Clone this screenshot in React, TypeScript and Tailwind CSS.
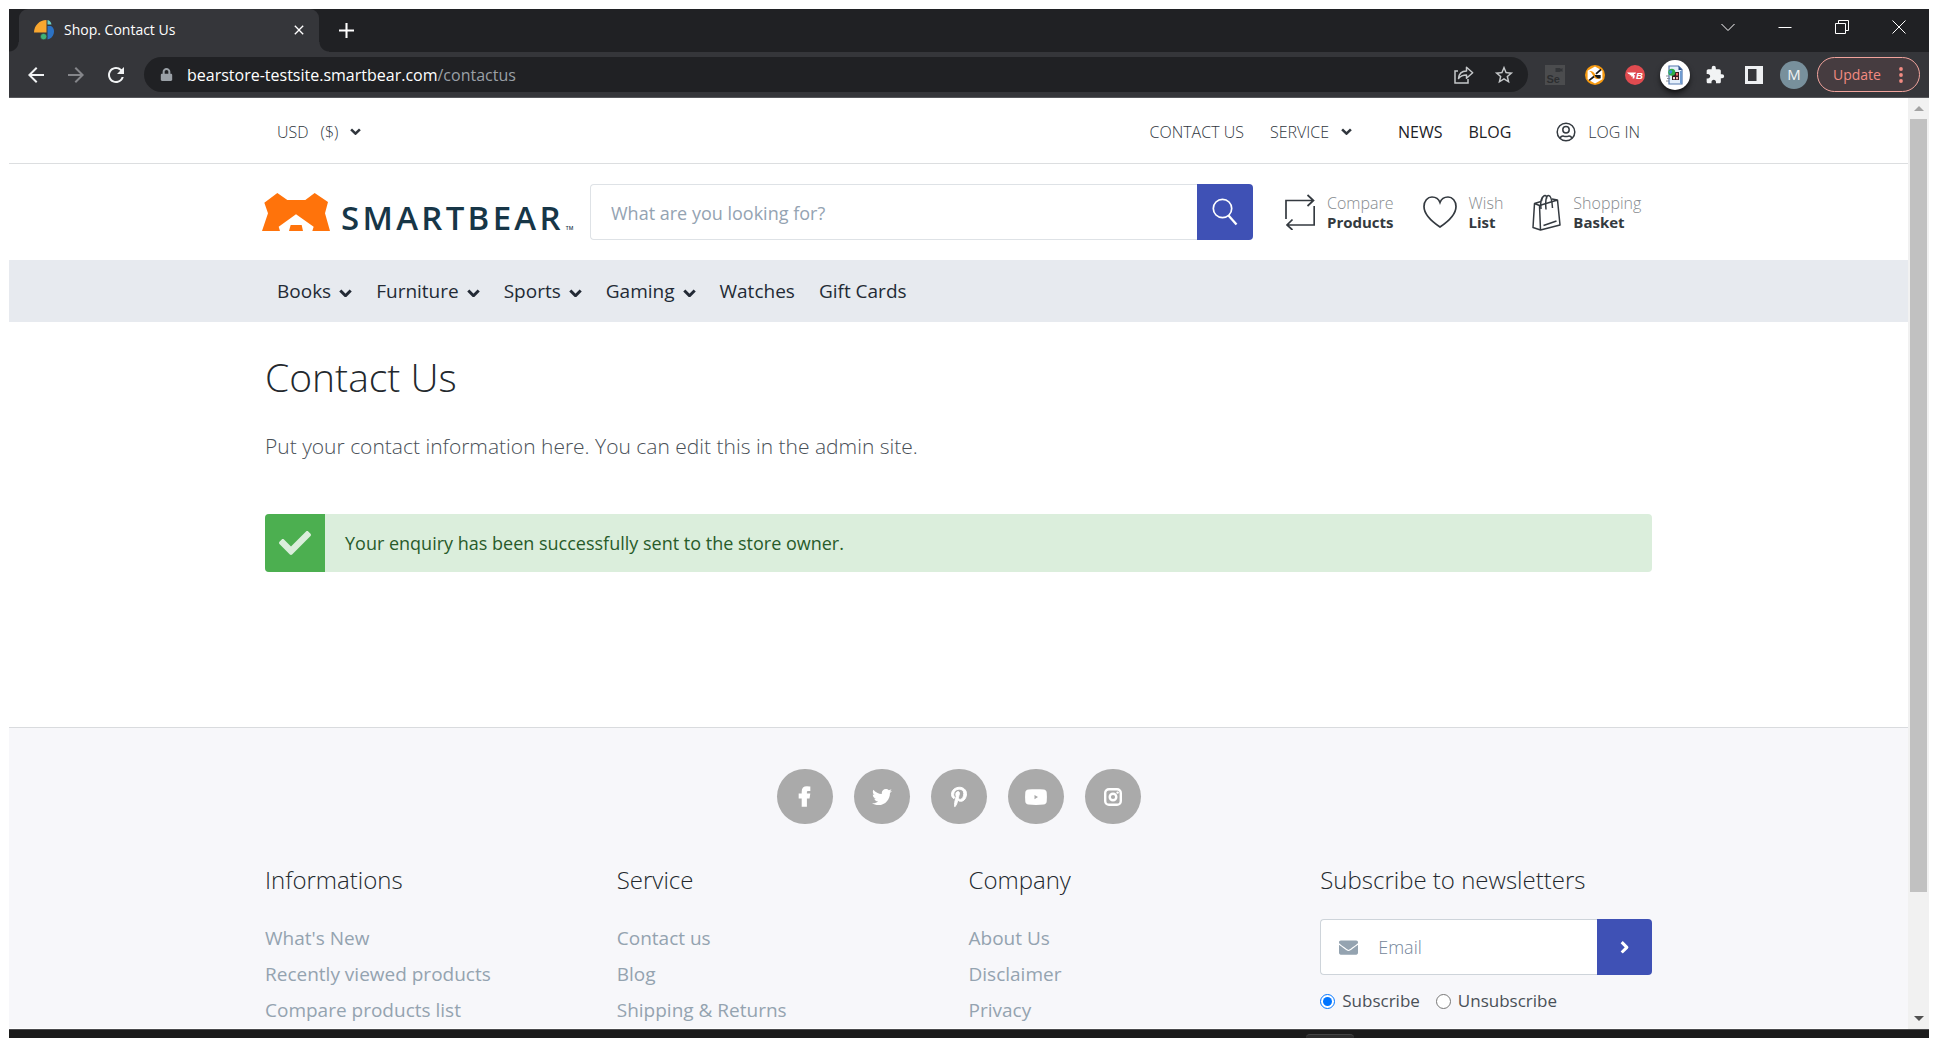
import React from "react";
import { FaCheck, FaEnvelope, FaFacebookF, FaLock, FaPinterestP, FaTwitter } from "react-icons/fa";
import { MdArrowBack, MdArrowForward, MdClose, MdExtension, MdRefresh, MdStarOutline } from "react-icons/md";

function Chevron({ className = "w-3" }: { className?: string }) {
  return (
    <svg viewBox="0 0 12 8" className={className} fill="none" stroke="currentColor" strokeWidth="2.8" strokeLinejoin="round" aria-hidden="true">
      <path d="M1.2 1.4 6 6.2l4.8-4.8" />
    </svg>
  );
}

function Favicon() {
  return (
    <svg viewBox="0 0 20 20" className="size-5 shrink-0" aria-hidden="true">
      <path d="M12.500 0v12.500H0C0 5.500 5.500 0 12.500 0Z" fill="#f9a72f" />
      <path d="M13.500 0c2 .6 3.600 2 4 4.500h-4Z" fill="#6fd0c4" />
      <path d="M13.500 6h3.500c3 1.500 3.500 5 2.600 8-.9 3-3.200 5-6.100 5.500Z" fill="#2c72c4" />
      <circle cx="9.600" cy="16.600" r="3.200" fill="#3fb277" stroke="#35363a" strokeWidth=".6" />
    </svg>
  );
}

function ShareIcon() {
  return (
    <svg viewBox="0 0 20 18" className="h-[18px] w-5" fill="none" stroke="#c4c7c9" strokeWidth="1.500" aria-hidden="true">
      <path d="M4 5H1v12h13v-4" />
      <path d="M4.500 12.500c.5-5 3.500-7.500 8-7.500V1.200l6.200 5.600-6.200 5.400V9c-3.500 0-6 1-8 3.500Z" strokeLinejoin="round" />
    </svg>
  );
}

function SeleniumIcon() {
  return (
    <svg viewBox="0 0 20 20" className="size-5" aria-hidden="true">
      <path d="M0 0h20v20H0Z" fill="#4b4c4e" />
      <path d="M10.500 3h5v1.200L17.500 3v4l-2-1.200V7h-5Z" fill="#333538" />
      <text x="1.500" y="17.500" fontSize="11" fontWeight="700" fontFamily="Liberation Sans, sans-serif" fill="#2c2e30">Se</text>
    </svg>
  );
}

function HexIcon() {
  return (
    <svg viewBox="0 0 20 20" className="size-5" aria-hidden="true">
      <circle cx="10" cy="10" r="10" fill="#f79a10" />
      <path d="m10 1.500 7.400 4.200v8.600L10 18.500l-7.400-4.200V5.700Z" fill="#fff" />
      <path d="M4 6c2.800 0 4.200.6 5.500 2.500l2 3c1 1.400 2 2 3.700 2.200-2.700.9-5 .2-6.200-1.700L7.300 9.200C6.500 7.700 5.700 6.700 4 6Z" fill="#f79a10" />
      <path d="m16 4.500-5 4.300M9 11.500l-4.800 3.800" stroke="#17191b" strokeWidth="1.700" />
      <path d="M9.500 10h6.200v3.200C13 14 11 13 9.500 10Z" fill="#17191b" />
    </svg>
  );
}

function BlazeIcon() {
  return (
    <svg viewBox="0 0 20 20" className="size-5" aria-hidden="true">
      <circle cx="10" cy="10" r="10" fill="#e04b50" />
      <path d="M2 7.500h9l-.8 1.500h-1l-.4 1.200H10l-.8 3.300H7.500l.4-2H6l.3-1.300H4.500L4.700 9H3.500Z" fill="#fff" />
      <text x="11" y="13.500" fontSize="9.500" fontWeight="700" fontStyle="italic" fontFamily="Liberation Sans, sans-serif" fill="#fff">B</text>
    </svg>
  );
}

function DocumentIcon() {
  return (
    <span className="flex size-[30px] items-center justify-center rounded-full bg-white shadow-md shadow-black/60">
      <svg viewBox="0 0 18 20" className="h-5 w-[18px]" aria-hidden="true">
        <path d="M3 1h9.500L16 4.500V19H3Z" fill="#e4effb" stroke="#5478ad" strokeWidth="1.200" />
        <path d="M12.500 1v4H16Z" fill="#2d4f86" />
        <path d="M14 6h2v12.500h-2Z" fill="#6f9bd0" />
        <path d="M6 7h7v8H6Z" fill="#3c1c24" />
        <path d="M10 8h2v2.500h-2Z" fill="#f06a6a" />
        <path d="M7 12h2v2.300H7Z" fill="#f4e0e1" />
        <path d="M10 12h2v2.300h-2Z" fill="#f4b0a6" />
        <circle cx="5.800" cy="7.200" r="3.500" fill="#2fae4a" />
        <path d="M3 6.500c1.200-1.500 2.500-1.500 3.500-.5L5 9c-1 0-1.800-.8-2-2.500Z" fill="#3f8fe0" />
        <path d="M0 11h3M1 13.500h3M0 16h3" stroke="#7f8790" strokeWidth=".9" />
      </svg>
    </span>
  );
}

function PanelIcon() {
  return (
    <svg viewBox="0 0 18 18" className="size-[18px]" aria-hidden="true">
      <path d="M0 0h18v18H0Zm3 3v12h8.500V3Z" fill="#eef0f2" fillRule="evenodd" />
    </svg>
  );
}

function WindowIcon({ d, label }: { d: string; label: string }) {
  return (
    <button aria-label={label} className="flex h-9 w-[57px] items-center justify-center">
      <svg viewBox="0 0 14 14" className="size-[14px]" fill="none" stroke="#fff" strokeWidth="1" aria-hidden="true">
        <path d={d} />
      </svg>
    </button>
  );
}

function TabStrip() {
  return (
    <div className="flex h-[43px] items-end bg-[#202124] pl-[10px]">
      <div className="relative flex h-[43px] w-[300px] items-center rounded-t-[9px] bg-[#35363a] pr-3 pb-0.5 pl-[15px] text-white">
        <span className="absolute bottom-0 -left-[10px] size-[10px] bg-[radial-gradient(circle_at_0_0,#202124_9px,#35363a_10px)]" />
        <span className="absolute -right-[10px] bottom-0 size-[10px] bg-[radial-gradient(circle_at_100%_0,#202124_9px,#35363a_10px)]" />
        <Favicon />
        <span className="ml-[10px] flex-1 text-sm">Shop. Contact Us</span>
        <button aria-label="Close tab"><MdClose size={16} /></button>
      </div>
      <button aria-label="New tab" className="flex h-[43px] w-[55px] items-center justify-center">
        <svg viewBox="0 0 16 16" className="size-[15px]" stroke="#fff" strokeWidth="2.200" aria-hidden="true">
          <path d="M8 0v16M0 8h16" />
        </svg>
      </button>
      <div className="ml-auto flex self-start pr-0.5">
        <WindowIcon label="Search tabs" d="m.5 4 6.500 6.500L13.500 4" />
        <WindowIcon label="Minimize" d="M.5 7.500h13" />
        <WindowIcon label="Restore" d="M.5 3.500h10v10h-10ZM3.500 3V.5h10v10H11" />
        <WindowIcon label="Close" d="m.5.5 13 13M13.500.5l-13 13" />
      </div>
    </div>
  );
}

function Toolbar() {
  return (
    <div className="flex h-[46px] items-center border-b border-[#56575b] bg-[#35363a] pr-[9px] pl-[15px] text-[#f1f3f4]">
      <div className="flex items-center gap-4">
        <button aria-label="Back"><MdArrowBack size={24} /></button>
        <button aria-label="Forward" className="text-[#85868a]"><MdArrowForward size={24} /></button>
        <button aria-label="Reload"><MdRefresh size={24} /></button>
      </div>
      <div className="ml-4 flex h-[35px] flex-1 items-center rounded-full bg-[#202124] pr-[13px] pl-4">
        <FaLock size={13} className="text-[#9aa0a6]" />
        <p className="ml-[14px] flex-1 text-base text-white">
          bearstore-testsite.smartbear.com<span className="text-[#9aa0a6]">/contactus</span>
        </p>
        <button aria-label="Share"><ShareIcon /></button>
        <button aria-label="Bookmark" className="ml-[19px] text-[#c4c7c9]"><MdStarOutline size={22} /></button>
      </div>
      <div className="ml-[17px] flex items-center gap-5">
        <SeleniumIcon />
        <HexIcon />
        <BlazeIcon />
        <div className="-mx-[5px]"><DocumentIcon /></div>
        <MdExtension size={20} />
        <PanelIcon />
        <span className="-ml-[3px] flex size-7 items-center justify-center rounded-full bg-[#78909c] text-[15px]">M</span>
      </div>
      <button className="ml-[9px] flex h-[35px] w-[103px] items-center justify-between rounded-full border border-[#f2a49d] bg-[#463c40] pr-4 pl-[15px] text-sm text-[#f28b82]">
        Update
        <svg viewBox="0 0 4 16" className="h-4 w-1" fill="currentColor" aria-hidden="true">
          <circle cx="2" cy="2" r="1.900" /><circle cx="2" cy="8" r="1.900" /><circle cx="2" cy="14" r="1.900" />
        </svg>
      </button>
    </div>
  );
}

const container = "mx-auto w-full max-w-[1387px]";

function TopBar() {
  return (
    <div className="border-b border-[#dcdee0]">
      <div className={`${container} flex h-[65px] items-center pt-0.5 pr-3 pl-3 text-base font-light text-[#30363d]`}>
        <button className="flex items-center gap-3">
          <span>USD</span><span>($)</span><Chevron className="w-[11px]" />
        </button>
        <nav className="ml-auto flex items-center">
          <a href="#contact">CONTACT US</a>
          <a href="#service" className="ml-[26px] flex items-center gap-3">SERVICE <Chevron className="w-[11px]" /></a>
          <a href="#news" className="ml-[46px] font-medium text-[#1c2126]">NEWS</a>
          <a href="#blog" className="ml-[26px] font-medium text-[#1c2126]">BLOG</a>
          <a href="#login" className="ml-[45px] flex items-center gap-3">
            <svg viewBox="0 0 20 20" className="size-5" fill="none" stroke="#343a40" strokeWidth="1.500" aria-hidden="true">
              <circle cx="10" cy="10" r="8.800" />
              <circle cx="10" cy="7.800" r="3.200" />
              <path d="M4 16c1.200-2 3-2.200 4-1.800 1.300.4 2.700.4 4 0 1-.4 2.800-.2 4 1.800" />
            </svg>
            LOG IN
          </a>
        </nav>
      </div>
    </div>
  );
}

function Logo() {
  return (
    <a href="#home" className="-ml-[3px] flex w-[328px] items-center">
      <svg viewBox="66 99 204 114" className="h-[38px] w-[68px]" fill="#ff730b" aria-hidden="true">
        <path d="m66 213 18-53-11-32 39-29 30 21h54l28-21 40 27-9 34 15 53h-53l4-13-53-37-52 37 4 13Z" />
        <path d="m147 213 5-18h33l4 18Z" />
      </svg>
      <span className="ml-[11px] flex items-baseline pt-[22px] pb-0 text-[33px] leading-9 font-semibold tracking-widest text-[#173647]">
        SMARTBEAR<span className="ml-0.5 text-[5px] tracking-normal">TM</span>
      </span>
    </a>
  );
}

function Tool({ top, bottom, children }: { top: string; bottom: string; children: React.ReactNode }) {
  return (
    <a href="#tool" className="flex items-center gap-3">
      {children}
      <span className="flex flex-col pt-0.5 leading-[19px]">
        <span className="text-base leading-[19px] font-light text-[#868a8e]">{top}</span>
        <span className="text-[15px] leading-[19px] font-bold text-[#343a40]">{bottom}</span>
      </span>
    </a>
  );
}

function Header() {
  return (
    <header className={`${container} flex h-24 items-center`}>
      <Logo />
      <form className="flex h-14 flex-1" onSubmit={(e) => e.preventDefault()}>
        <input aria-label="Search" placeholder="What are you looking for?" className="min-w-0 flex-1 rounded-l border border-r-0 border-[#dee2e6] px-5 pt-0.5 text-lg outline-none placeholder:text-[#94a3b2]" />
        <button aria-label="Search" className="flex w-14 items-center justify-center rounded-r bg-[#3f51b5]">
          <svg viewBox="0 0 26 28" className="h-7 w-[26px]" fill="none" stroke="#fff" strokeWidth="1.700" aria-hidden="true">
            <circle cx="10.500" cy="10.500" r="9.200" />
            <path d="m16.500 17.500 8 9" strokeWidth="2.300" />
          </svg>
        </button>
      </form>
      <div className="ml-8 flex w-[367px] items-center gap-[29px]">
        <Tool top="Compare" bottom="Products">
          <svg viewBox="0 0 30 36" className="h-9 w-[30px]" fill="none" stroke="#343a40" strokeWidth="1.700" aria-hidden="true">
            <path d="M1 25V6.500h27M22.500 1l6 5.500-6 5.500M29.200 12v19H2M7.500 25.500 2 31l5.500 5" />
          </svg>
        </Tool>
        <Tool top="Wish" bottom="List">
          <svg viewBox="0 0 34 32" className="h-8 w-[34px]" fill="none" stroke="#343a40" strokeWidth="1.700" aria-hidden="true">
            <path d="M17 31C11 27 1 19 1 10.500 1 5 4.500 1 9 1c3.800 0 6.800 2.200 8 5.500C18.200 3.200 21.200 1 25 1c4.500 0 8 4 8 9.500C33 19 23 27 17 31Z" />
          </svg>
        </Tool>
        <Tool top="Shopping" bottom="Basket">
          <svg viewBox="0 0 29 37" className="h-[37px] w-[29px]" fill="none" stroke="#343a40" strokeWidth="1.500" strokeLinejoin="round" aria-hidden="true">
            <path d="M2.500 9.500 1 33.500 8.500 36 28 31 25.500 6 7.500 11.500 2.500 9.500 9 7.500M20 5l5.500 1M7.500 11.500l1 24.500M11.500 31.500 24.500 27" />
            <path d="M9 15c-.8-6 0-11.500 3.500-13.500M14 15.500c-1-7 0-14 2.500-14s3.500 4 4 12.500M9.500 7c.8-4 2-5.800 3.800-5.500 1 .2 1.500 1.500 1.500 3" />
          </svg>
        </Tool>
      </div>
    </header>
  );
}

const menu: [string, boolean][] = [["Books", true], ["Furniture", true], ["Sports", true], ["Gaming", true], ["Watches", false], ["Gift Cards", false]];

function MainNav() {
  return (
    <nav className="bg-[#e7eaef]">
      <ul className={`${container} flex h-[62px] items-center gap-6 pl-3 text-[19px] font-medium text-[#232a35]`}>
        {menu.map(([name, more]) => (
          <li key={name}>
            <a href="#menu" className="flex items-center gap-2">
              {name}
              {more && <Chevron className="mt-1 w-[13px]" />}
            </a>
          </li>
        ))}
      </ul>
    </nav>
  );
}

function Content() {
  return (
    <main className={`${container} pt-[31px] pb-[155px]`}>
      <h1 className="text-[39px] leading-[48px] font-light text-[#23282d]">Contact Us</h1>
      <p className="mt-[29px] text-[21px] leading-8 font-light text-[#495057]">Put your contact information here. You can edit this in the admin site.</p>
      <div role="status" className="mt-[52px] flex min-h-[58px] overflow-hidden rounded bg-[#dbeedc]">
        <span className="flex w-[60px] items-center justify-center bg-[#4caf50] text-[#dbeedc]"><FaCheck size={32} /></span>
        <p className="self-center pl-5 text-lg text-[#285b2a]">Your enquiry has been successfully sent to the store owner.</p>
      </div>
    </main>
  );
}

function YoutubeIcon() {
  return (
    <svg viewBox="0 0 22 16" className="h-4 w-[22px]" fill="currentColor" aria-hidden="true">
      <path fillRule="evenodd" d="M3.500.5C8 0 14 0 18.500.5c2 .2 3 1.200 3.200 3 .3 3 .3 6 0 9-.2 1.800-1.200 2.800-3.200 3-4.500.5-10.500.5-15 0-2-.2-3-1.200-3.200-3-.3-3-.3-6 0-9 .2-1.800 1.200-2.800 3.200-3ZM9.500 6v4.200L13 8Z" />
    </svg>
  );
}

function InstagramIcon() {
  return (
    <svg viewBox="0 0 18 18" className="size-[18px]" fill="none" stroke="currentColor" aria-hidden="true">
      <rect x="1.200" y="1.200" width="15.600" height="15.600" rx="3.800" strokeWidth="2.400" />
      <circle cx="9" cy="9" r="3.300" strokeWidth="2.400" />
      <circle cx="13.600" cy="4.600" r="1.200" fill="currentColor" stroke="none" />
    </svg>
  );
}

const socials = [
  { name: "Facebook", icon: <FaFacebookF size={19} className="overflow-visible stroke-white stroke-[40]" /> },
  { name: "Twitter", icon: <FaTwitter size={20} /> },
  { name: "Pinterest", icon: <FaPinterestP size={20} className="overflow-visible stroke-white stroke-[24]" /> },
  { name: "YouTube", icon: <YoutubeIcon /> },
  { name: "Instagram", icon: <InstagramIcon /> },
];

const columns = [
  { title: "Informations", links: ["What's New", "Recently viewed products", "Compare products list"] },
  { title: "Service", links: ["Contact us", "Blog", "Shipping & Returns"] },
  { title: "Company", links: ["About Us", "Disclaimer", "Privacy"] },
];

const footerTitle = "text-2xl leading-8 font-light text-[#23282d]";

function Footer() {
  return (
    <footer className="border-t border-[#d9dbde] bg-[#f7f7fa] pt-[41px]">
      <div className="flex justify-center gap-[21px]">
        {socials.map((s) => (
          <a key={s.name} href="#social" aria-label={s.name} className="flex h-[55px] w-14 items-center justify-center rounded-full bg-[#aaa] text-white">{s.icon}</a>
        ))}
      </div>
      <div className={`${container} mt-10 grid grid-cols-4 gap-5`}>
        {columns.map((c) => (
          <section key={c.title}>
            <h2 className={footerTitle}>{c.title}</h2>
            <ul className="mt-6 text-[19px] leading-9 text-[#94a3b0]">
              {c.links.map((l) => <li key={l}><a href="#link">{l}</a></li>)}
            </ul>
          </section>
        ))}
        <section>
          <h2 className={footerTitle}>Subscribe to newsletters</h2>
          <form onSubmit={(e) => e.preventDefault()}>
            <div className="mt-[23px] flex h-14">
              <label className="flex min-w-0 flex-1 items-center gap-5 rounded-l border border-r-0 border-[#ced4da] bg-white pl-[18px]">
                <FaEnvelope size={19} className="shrink-0 text-[#94a3b0]" />
                <input type="email" aria-label="Email" placeholder="Email" className="w-full min-w-0 text-lg font-light outline-none placeholder:text-[#74869a]" />
              </label>
              <button aria-label="Submit" className="flex w-[55px] items-center justify-center rounded-r bg-[#3f51b5] text-white">
                <Chevron className="w-[13px] -rotate-90" />
              </button>
            </div>
            <div className="mt-3 flex items-center gap-4 text-[17px] leading-7 text-[#495057]">
              <label className="flex items-center gap-[7px]"><input type="radio" name="mode" defaultChecked className="size-[15px]" />Subscribe</label>
              <label className="flex items-center gap-[7px]"><input type="radio" name="mode" className="size-[15px]" />Unsubscribe</label>
            </div>
          </form>
        </section>
      </div>
    </footer>
  );
}

function Scrollbar() {
  return (
    <div className="flex w-[21px] shrink-0 flex-col items-center bg-[#f1f1f1]" aria-hidden="true">
      <svg viewBox="0 0 20 21" className="h-[21px] w-5 shrink-0"><path d="m10 8 5 5H5Z" fill="#a3a3a3" /></svg>
      <div className="h-[83%] w-[17px] bg-[#c1c1c1]" />
      <svg viewBox="0 0 20 21" className="mt-auto h-[21px] w-5 shrink-0"><path d="m10 13-5-5h10Z" fill="#505050" /></svg>
    </div>
  );
}

export default function App() {
  return (
    <div className="flex h-screen flex-col bg-white px-[9px] pt-[9px] font-['Open_Sans','Noto_Sans',sans-serif]">
      <TabStrip />
      <Toolbar />
      <div className="flex min-h-0 flex-1">
        <div className="min-w-0 flex-1 overflow-hidden">
          <TopBar />
          <Header />
          <MainNav />
          <Content />
          <Footer />
        </div>
        <Scrollbar />
      </div>
      <div className="flex h-[9px] shrink-0 items-end overflow-hidden border-t border-[#4a4a4c] bg-[#1b1b1b]">
        <span className="ml-[1297px] h-1 w-12 rounded-t-sm border-t border-[#444] bg-[#2c2c2c]" />
      </div>
    </div>
  );
}
